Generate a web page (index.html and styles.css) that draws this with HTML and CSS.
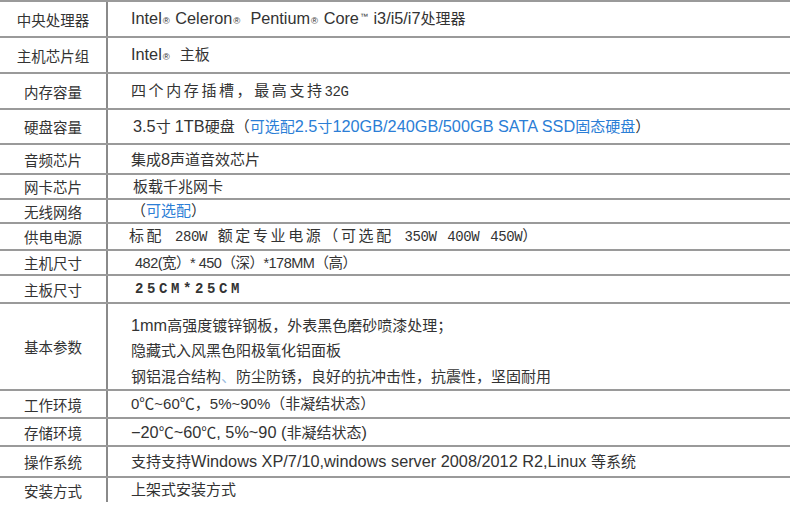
FILE: index.html
```html
<!DOCTYPE html>
<html lang="zh">
<head>
<meta charset="utf-8">
<title>规格参数</title>
<link rel="stylesheet" href="styles.css">
</head>
<body>
<div class="spec">
  <div class="row"><div class="label">中央处理器</div><div class="value"><span class="txt"><span class="lat">Intel<span class="reg">®</span> Celeron<span class="reg">®</span>&nbsp; Pentium<span class="reg">®</span> Core<span class="tm">™</span> i3/i5/i7</span>处理器</span></div></div>
  <div class="row"><div class="label">主机芯片组</div><div class="value"><span class="txt"><span class="lat">Intel<span class="reg">®</span>&nbsp; </span>主板</span></div></div>
  <div class="row"><div class="label">内存容量</div><div class="value wide"><span class="txt">四个内存插槽，最高支持<span class="mono">32G</span></span></div></div>
  <div class="row"><div class="label">硬盘容量</div><div class="value in2"><span class="txt"><span class="lat">3.5</span>寸 <span class="lat">1TB</span>硬盘（<span class="blue">可选配<span class="lat">2.5</span>寸<span class="lat">120GB/240GB/500GB SATA SSD</span>固态硬盘</span>）</span></div></div>
  <div class="row"><div class="label">音频芯片</div><div class="value"><span class="txt">集成<span class="lat">8</span>声道音效芯片</span></div></div>
  <div class="row"><div class="label">网卡芯片</div><div class="value in2"><span class="txt">板载千兆网卡</span></div></div>
  <div class="row"><div class="label">无线网络</div><div class="value"><span class="txt">（<span class="blue">可选配</span>）</span></div></div>
  <div class="row"><div class="label">供电电源</div><div class="value wide out"><span class="txt spaced">标配 <span class="mono">280W</span> 额定专业电源（可选配 <span class="mono">350W</span> <span class="mono">400W</span> <span class="mono">450W</span>）</span></div></div>
  <div class="row"><div class="label">主机尺寸</div><div class="value in4 dims"><span class="txt">482(宽）* 450（深）*178MM（高）</span></div></div>
  <div class="row"><div class="label">主板尺寸</div><div class="value in4"><span class="txt board">25CM*25CM</span></div></div>
  <div class="row"><div class="label">基本参数</div><div class="value lines"><p><span class="lat">1mm</span>高强度镀锌钢板，外表黑色磨砂喷漆处理；</p><p>隐藏式入风黑色阳极氧化铝面板</p><p>钢铝混合结构<span class="faint">、</span>防尘防锈，良好的抗冲击性，抗震性，坚固耐用</p></div></div>
  <div class="row"><div class="label">工作环境</div><div class="value"><span class="txt">0℃~60℃，5%~90%（非凝结状态）</span></div></div>
  <div class="row"><div class="label">存储环境</div><div class="value"><span class="txt"><span class="lat">−20</span>℃<span class="lat">~60</span>℃<span class="lat">, 5%~90 (</span>非凝结状态<span class="lat">)</span></span></div></div>
  <div class="row"><div class="label">操作系统</div><div class="value"><span class="txt">支持支持<span class="lat">Windows XP/7/10,windows server 2008/2012 R2,Linux </span>等系统</span></div></div>
  <div class="row"><div class="label">安装方式</div><div class="value"><span class="txt">上架式安装方式</span></div></div>
</div>
</body>
</html>
```

FILE: styles.css
```css
html, body {
  margin: 0;
  padding: 0;
  background: #ffffff;
}

body {
  font-family: "Liberation Sans", "Noto Sans CJK SC", sans-serif;
  color: #333333;
}

.spec {
  width: 790px;
  display: grid;
  grid-template-rows: 36px 36px 36px 35px 30px 25px 24px 27px 25px 28px 87px 28px 28px 31px 26px;
}

.row {
  display: grid;
  grid-template-columns: 108px 1fr;
  border-top: 2px solid #9a9a9a;
  min-height: 0;
}

.label {
  display: flex;
  align-items: center;
  justify-content: center;
  border-right: 2px solid #8a8a8a;
  font-size: 14.5px;
  color: #333333;
}

.value {
  display: flex;
  align-items: center;
  padding-left: 23px;
  font-size: 15px;
  color: #333333;
}

.txt {
  white-space: pre;
  line-height: 20px;
}

.value.in2 { padding-left: 25px; }
.value.in4 { padding-left: 27px; }
.value.out { padding-left: 21px; }

.lat {
  font-size: 16.3px;
}

.reg {
  font-size: 9.5px;
  margin: 0 1px 0 1px;
}

.tm {
  font-size: 8px;
  vertical-align: 5px;
  margin: 0 1px;
}

.wide {
  letter-spacing: 2.6px;
}

.spaced {
  word-spacing: 4px;
}

.mono {
  font-family: "Liberation Mono", monospace;
  font-size: 14px;
  letter-spacing: -0.4px;
}

.dims {
  font-size: 14.5px;
  letter-spacing: -0.5px;
}

.blue {
  color: #2b7ed6;
}

.board {
  font-family: "Liberation Mono", monospace;
  font-weight: bold;
  font-size: 14px;
  letter-spacing: 3.6px;
}

.lines {
  flex-direction: column;
  align-items: flex-start;
  justify-content: center;
  gap: 6.5px;
  padding-top: 8px;
}

.lines p {
  margin: 0;
  line-height: 19px;
  white-space: pre;
}

.faint {
  color: #9bbbe0;
}
```
